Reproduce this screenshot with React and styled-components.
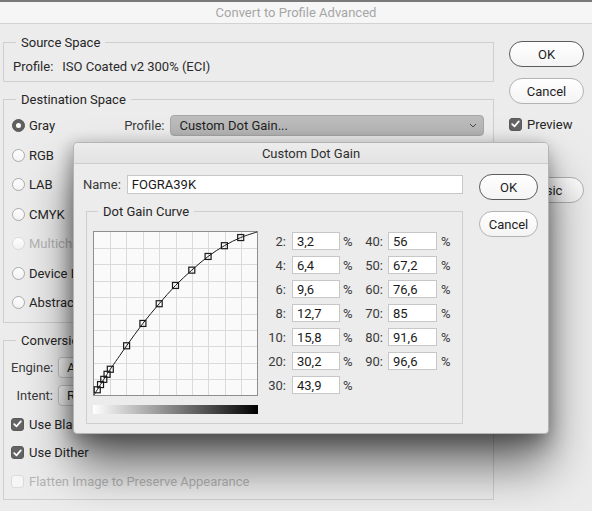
import React from 'react';
import styled, { createGlobalStyle } from 'styled-components';

const GlobalStyle = createGlobalStyle`
  html, body {
    margin: 0;
    padding: 0;
    background: #ececec;
  }
  body {
    font-family: 'Roboto', 'Liberation Sans', sans-serif;
    font-size: 13px;
    color: #2a2a2a;
  }
`;

const Window = styled.div`
  position: relative;
  width: 592px;
  height: 511px;
  overflow: hidden;
  background: #ececec;
`;

const TitleBar = styled.div`
  height: 21px;
  border-top: 2px solid #7a7a7a;
  border-bottom: 1px solid #d2d2d2;
  background: #f6f6f6;
  color: #a6a6a6;
  display: flex;
  align-items: center;
  justify-content: center;
  font-size: 13px;
`;

const Body = styled.div`
  display: flex;
  gap: 15px;
  padding: 18px 8px 0 3px;
`;

const LeftCol = styled.div`
  width: 491px;
  display: flex;
  flex-direction: column;
  gap: 17px;
`;

const RightCol = styled.div`
  width: 75px;
  margin-top: -1px;
  display: flex;
  flex-direction: column;
`;

const Group = styled.div`
  position: relative;
  box-sizing: border-box;
  height: ${(p) => p.$h}px;
  width: ${(p) => (p.$w ? `${p.$w}px` : 'auto')};
  border: 1px solid #cfcfcf;
  padding: ${(p) => p.$pad || '0'};
`;

const Legend = styled.span`
  position: absolute;
  top: -8px;
  left: ${(p) => p.$left || 12}px;
  padding: 0 5px;
  line-height: 16px;
  background: #ececec;
  color: #262626;
`;

const ProfileLine = styled.div`
  display: flex;
  align-items: center;
  height: 16px;
  padding: 15px 0 0 9px;
  span + span {
    margin-left: 9px;
  }
`;

const RadioRow = styled.div`
  display: flex;
  align-items: center;
  height: 29.5px;
  padding-left: 8px;
  color: ${(p) => (p.$disabled ? '#b4b4b4' : '#262626')};
  white-space: nowrap;
`;

const Radio = styled.span`
  position: relative;
  box-sizing: border-box;
  width: 13px;
  height: 13px;
  margin-right: 4px;
  border-radius: 50%;
  border: 1px solid ${(p) => (p.$checked ? '#555' : p.$disabled ? '#dadada' : '#ababab')};
  background: ${(p) => (p.$checked ? '#606060' : 'linear-gradient(#ffffff, #f3f3f3)')};
  &::after {
    content: '';
    display: ${(p) => (p.$checked ? 'block' : 'none')};
    position: absolute;
    left: 3px;
    top: 3px;
    width: 5px;
    height: 5px;
    border-radius: 50%;
    background: #fff;
  }
`;

const ProfileLabel = styled.span`
  margin-left: 69px;
  margin-right: 6px;
  color: #3a3a3a;
`;

const Select = styled.div`
  box-sizing: border-box;
  display: flex;
  align-items: center;
  justify-content: space-between;
  width: ${(p) => p.$w}px;
  height: ${(p) => p.$hh || 21}px;
  padding: 0 6px 0 8px;
  border: 1px solid ${(p) => (p.$dark ? '#a5a5a5' : '#c6c6c6')};
  border-radius: 4px;
  background: ${(p) => (p.$dark ? 'linear-gradient(#bdbdbd, #b3b3b3)' : 'linear-gradient(#fbfbfb, #f1f1f1)')};
  color: #1f1f1f;
`;

const FormRow = styled.div`
  display: flex;
  align-items: center;
  height: 28.5px;
  padding-left: 7px;
  white-space: nowrap;
  color: ${(p) => (p.$disabled ? '#b4b4b4' : '#262626')};
`;

const FieldLabel = styled.span`
  width: 42px;
  text-align: right;
  margin-right: 5px;
  color: #3a3a3a;
`;

const Check = styled.span`
  box-sizing: border-box;
  display: inline-flex;
  align-items: center;
  justify-content: center;
  width: 13px;
  height: 13px;
  margin-right: 5px;
  border-radius: 3px;
  background: ${(p) => (p.$checked ? '#646464' : '#f6f6f6')};
  border: 1px solid ${(p) => (p.$checked ? '#5a5a5a' : '#dcdcdc')};
`;

const Button = styled.div`
  box-sizing: border-box;
  display: flex;
  align-items: center;
  justify-content: center;
  width: ${(p) => p.$w || 75}px;
  height: 26px;
  margin-top: ${(p) => p.$mt || 0}px;
  border-radius: 13px;
  border: 1px solid ${(p) => (p.$default ? '#5c5c5c' : '#b3b3b3')};
  background: linear-gradient(#ffffff, #f4f4f4);
  color: #1f1f1f;
`;

const PreviewRow = styled.div`
  display: flex;
  align-items: center;
  height: 16px;
  margin-top: 12px;
  color: #262626;
`;

const Dialog = styled.div`
  position: absolute;
  left: 73px;
  top: 142px;
  box-sizing: border-box;
  width: 476px;
  height: 292px;
  border: 1px solid #b4b4b4;
  border-radius: 5px 5px 4px 4px;
  background: #ececec;
  box-shadow: 0 32px 48px rgba(0, 0, 0, 0.55), 0 10px 20px rgba(0, 0, 0, 0.28),
    -4px 0 14px rgba(0, 0, 0, 0.12);
  overflow: hidden;
`;

const DialogTitle = styled.div`
  height: 20px;
  border-bottom: 1px solid #cdcdcd;
  background: linear-gradient(#ececec, #e3e3e3);
  display: flex;
  align-items: center;
  justify-content: center;
  color: #2f2f2f;
`;

const DialogBody = styled.div`
  display: flex;
  padding: 11px 9px 0 9px;
`;

const DialogMain = styled.div`
  width: 380px;
  display: flex;
  flex-direction: column;
`;

const DialogButtons = styled.div`
  width: 59px;
  margin-left: 16px;
  margin-top: -1px;
  display: flex;
  flex-direction: column;
`;

const NameRow = styled.div`
  display: flex;
  align-items: center;
  height: 19px;
  gap: 6px;
  color: #3a3a3a;
`;

const TextInput = styled.div`
  box-sizing: border-box;
  display: flex;
  align-items: center;
  width: ${(p) => p.$w}px;
  height: ${(p) => p.$hh || 19}px;
  padding-left: 4px;
  border: 1px solid #c7c7c7;
  background: #fff;
  color: #1a1a1a;
`;

const CurveGroup = styled(Group)`
  margin-left: 3px;
  margin-top: 17px;
`;

const CurveArea = styled.div`
  display: flex;
  gap: 2px;
`;

const ChartCol = styled.div`
  display: flex;
  flex-direction: column;
  gap: 9px;
  width: 165px;
`;

const Ramp = styled.div`
  height: 9px;
  background: linear-gradient(to right, #ffffff, #000000);
`;

const ValueGrid = styled.div`
  margin-top: 1px;
  display: grid;
  grid-template-columns: 32px 48px 20px 28px 49px 20px;
  grid-auto-rows: 18px;
  row-gap: 6px;
  align-items: center;
`;

const ValueLabel = styled.span`
  text-align: right;
  padding-right: ${(p) => p.$pr}px;
  color: #3a3a3a;
`;

const Pct = styled.span`
  padding-left: ${(p) => p.$pl}px;
  color: #3a3a3a;
`;

const CheckMark = () => (
  <svg width="9" height="8" viewBox="0 0 9 8">
    <path d="M1.2 4.2 L3.5 6.4 L7.8 1.4" fill="none" stroke="#fff" strokeWidth="1.7" strokeLinecap="round" strokeLinejoin="round" />
  </svg>
);

const Chevron = () => (
  <svg width="8" height="5" viewBox="0 0 8 5">
    <path d="M1 1 L4 4 L7 1" fill="none" stroke="#4a4a4a" strokeWidth="1" />
  </svg>
);

const P = [0, 2, 4, 6, 8, 10, 20, 30, 40, 50, 60, 70, 80, 90, 100];
const V = [0, 3.2, 6.4, 9.6, 12.7, 15.8, 30.2, 43.9, 56, 67.2, 76.6, 85, 91.6, 96.6, 100];

const toXY = (p, v) => [1 + p * 1.63, 164 - v * 1.63];

const smoothPath = (pts) => {
  let d = `M${pts[0][0]},${pts[0][1]}`;
  for (let i = 0; i < pts.length - 1; i++) {
    const p0 = pts[i - 1] || pts[i];
    const p1 = pts[i];
    const p2 = pts[i + 1];
    const p3 = pts[i + 2] || p2;
    const c1 = [p1[0] + (p2[0] - p0[0]) / 6, p1[1] + (p2[1] - p0[1]) / 6];
    const c2 = [p2[0] - (p3[0] - p1[0]) / 6, p2[1] - (p3[1] - p1[1]) / 6];
    d += ` C${c1[0]},${c1[1]} ${c2[0]},${c2[1]} ${p2[0]},${p2[1]}`;
  }
  return d;
};

const CurveChart = () => {
  const pts = P.map((p, i) => toXY(p, V[i]));
  const lines = Array.from({ length: 9 }, (_, i) => 0.5 + (i + 1) * 16.4);
  return (
    <svg width="165" height="165" viewBox="0 0 165 165">
      <rect x="0.5" y="0.5" width="164" height="164" fill="#fafafa" stroke="#8e8e8e" />
      {lines.map((l) => (
        <g key={l}>
          <line x1={Math.round(l) + 0.5} y1="1" x2={Math.round(l) + 0.5} y2="164" stroke="#dadada" />
          <line x1="1" y1={Math.round(l) + 0.5} x2="164" y2={Math.round(l) + 0.5} stroke="#dadada" />
        </g>
      ))}
      <path d={smoothPath(pts)} fill="none" stroke="#1a1a1a" strokeWidth="1" />
      {pts.slice(1, -1).map(([x, y]) => (
        <rect key={x} x={x - 3} y={y - 3} width="6" height="6" fill="none" stroke="#1a1a1a" strokeWidth="1.2" />
      ))}
    </svg>
  );
};

const left = [
  ['2', '3,2'],
  ['4', '6,4'],
  ['6', '9,6'],
  ['8', '12,7'],
  ['10', '15,8'],
  ['20', '30,2'],
  ['30', '43,9'],
];
const right = [
  ['40', '56'],
  ['50', '67,2'],
  ['60', '76,6'],
  ['70', '85'],
  ['80', '91,6'],
  ['90', '96,6'],
];

const radios = [
  { label: 'RGB' },
  { label: 'LAB' },
  { label: 'CMYK' },
  { label: 'Multichannel', disabled: true },
  { label: 'Device Link' },
  { label: 'Abstract' },
];

const App = () => (
  <Window>
    <GlobalStyle />
    <TitleBar>Convert to Profile Advanced</TitleBar>
    <Body>
      <LeftCol>
        <Group $h={40}>
          <Legend>Source Space</Legend>
          <ProfileLine>
            <span>Profile:</span>
            <span>ISO Coated v2 300% (ECI)</span>
          </ProfileLine>
        </Group>
        <Group $h={224} $pad="11px 0 0 0">
          <Legend>Destination Space</Legend>
          <RadioRow>
            <Radio $checked />
            Gray
            <ProfileLabel>Profile:</ProfileLabel>
            <Select $w={314} $dark>
              <span>Custom Dot Gain...</span>
              <Chevron />
            </Select>
          </RadioRow>
          {radios.map((r) => (
            <RadioRow key={r.label} $disabled={r.disabled}>
              <Radio $disabled={r.disabled} />
              {r.label}
            </RadioRow>
          ))}
        </Group>
        <Group $h={160} $pad="12px 0 0 0">
          <Legend>Conversion Options</Legend>
          <FormRow>
            <FieldLabel>Engine:</FieldLabel>
            <Select $w={200} $hh={21}>
              <span>Adobe (ACE)</span>
            </Select>
          </FormRow>
          <FormRow>
            <FieldLabel>Intent:</FieldLabel>
            <Select $w={200} $hh={21}>
              <span>Relative Colorimetric</span>
            </Select>
          </FormRow>
          <FormRow>
            <Check $checked>
              <CheckMark />
            </Check>
            Use Black Point Compensation
          </FormRow>
          <FormRow>
            <Check $checked>
              <CheckMark />
            </Check>
            Use Dither
          </FormRow>
          <FormRow $disabled>
            <Check />
            Flatten Image to Preserve Appearance
          </FormRow>
        </Group>
      </LeftCol>
      <RightCol>
        <Button $default>OK</Button>
        <Button $mt={11}>Cancel</Button>
        <PreviewRow>
          <Check $checked>
            <CheckMark />
          </Check>
          Preview
        </PreviewRow>
        <Button $mt={45}>Basic</Button>
      </RightCol>
    </Body>

    <Dialog>
      <DialogTitle>Custom Dot Gain</DialogTitle>
      <DialogBody>
        <DialogMain>
          <NameRow>
            <span>Name:</span>
            <TextInput $w={338}>FOGRA39K</TextInput>
          </NameRow>
          <CurveGroup $h={213} $w={377} $pad="19px 0 0 6px">
            <Legend $left={11}>Dot Gain Curve</Legend>
            <CurveArea>
              <ChartCol>
                <CurveChart />
                <Ramp />
              </ChartCol>
              <ValueGrid>
                {left.map(([k, v], i) => (
                  <React.Fragment key={k}>
                    <ValueLabel $pr={6}>{k}:</ValueLabel>
                    <TextInput $w={48} $hh={18}>{v}</TextInput>
                    <Pct $pl={3}>%</Pct>
                    {right[i] ? (
                      <>
                        <ValueLabel $pr={5}>{right[i][0]}:</ValueLabel>
                        <TextInput $w={49} $hh={18}>{right[i][1]}</TextInput>
                        <Pct $pl={4}>%</Pct>
                      </>
                    ) : (
                      <>
                        <span />
                        <span />
                        <span />
                      </>
                    )}
                  </React.Fragment>
                ))}
              </ValueGrid>
            </CurveArea>
          </CurveGroup>
        </DialogMain>
        <DialogButtons>
          <Button $default $w={59}>OK</Button>
          <Button $w={59} $mt={11}>Cancel</Button>
        </DialogButtons>
      </DialogBody>
    </Dialog>
  </Window>
);

export default App;
